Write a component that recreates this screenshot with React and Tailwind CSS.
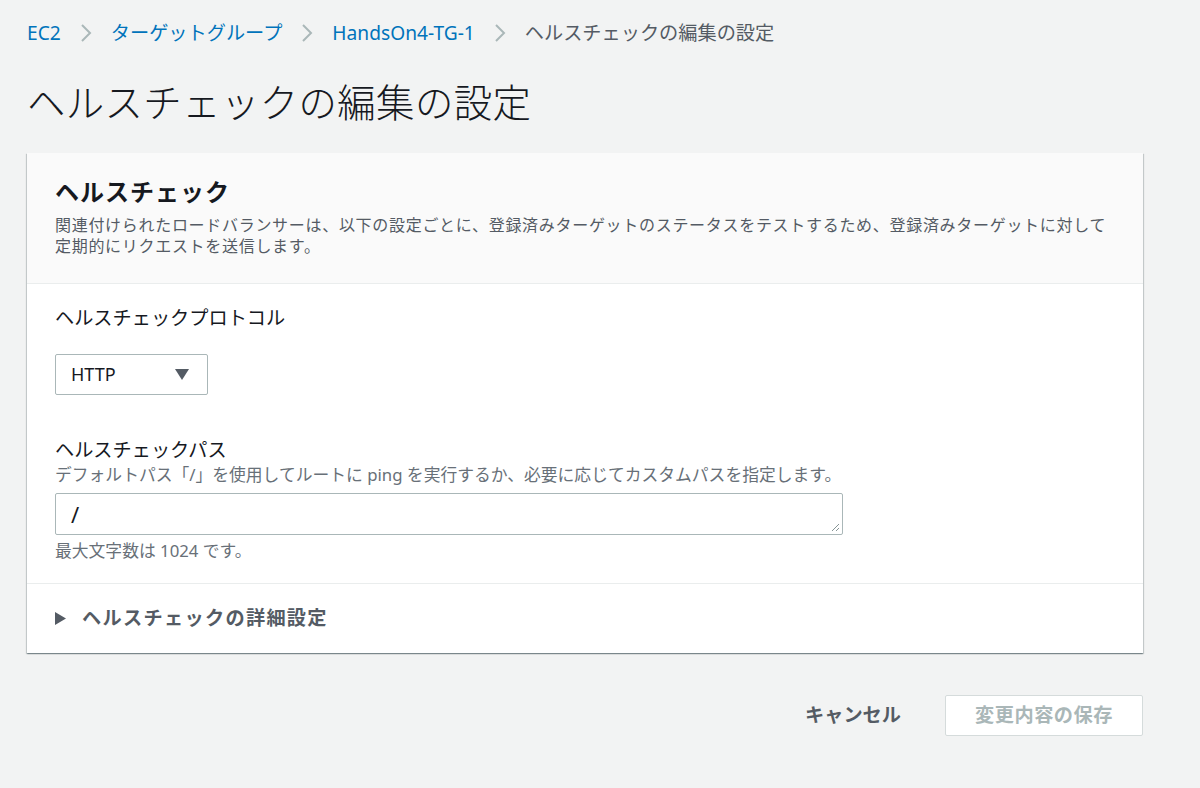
import React from "react";

const font = { fontFamily: '"Noto Sans", "Noto Sans CJK JP", sans-serif' };

const Chevron = () => (
  <svg width="12" height="20" viewBox="0 0 12 20" className="mx-[19px]">
    <path d="M2 2 L10 10 L2 18" fill="none" stroke="#aab7b8" strokeWidth="2" />
  </svg>
);

const App = () => {
  return (
    <div
      className="min-h-[788px] w-[1200px] bg-[#f2f3f3] text-[#16191f] px-[27px] overflow-hidden"
      style={font}
    >
      <nav className="flex items-center h-[20px] mt-[23px] text-[19.2px] leading-[20px]">
        <a className="text-[#0073bb]">EC2</a>
        <Chevron />
        <a className="text-[#0073bb]">ターゲットグループ</a>
        <Chevron />
        <a className="text-[#0073bb]">HandsOn4-TG-1</a>
        <Chevron />
        <span className="text-[#545b64]">ヘルスチェックの編集の設定</span>
      </nav>

      <h1 className="mt-[35px] text-[38.4px] leading-[48px] font-light tracking-[0.4px]">
        ヘルスチェックの編集の設定
      </h1>

      <div className="mt-[27px] w-[1116px] bg-white shadow-[0_1px_1px_0_rgba(0,28,36,0.3),1px_1px_1px_0_rgba(0,28,36,0.15),-1px_1px_1px_0_rgba(0,28,36,0.15)]">
        <div className="bg-[#fafafa] border-b border-[#eaeded] px-[28px] pt-[23px] h-[131px]">
          <h2 className="text-[24px] leading-[32px] font-bold tracking-[1px]">ヘルスチェック</h2>
          <div className="mt-[7px] text-[16px] leading-[21px] text-[#545b64] tracking-[0.7px]">
            <div>
              関連付けられたロードバランサーは、以下の設定ごとに、登録済みターゲットのステータスをテストするため、登録済みターゲットに対して
            </div>
            <div>定期的にリクエストを送信します。</div>
          </div>
        </div>

        <div className="px-[28px] pt-[21px] pb-[22px] border-b border-[#eaeded]">
          <div className="text-[19.2px] leading-[26px]">ヘルスチェックプロトコル</div>
          <div className="mt-[23px] w-[153px] h-[41px] border border-[#aab7b8] rounded-[2px] bg-white flex items-center justify-between pl-[15px] pr-[18px]">
            <span className="text-[18px]">HTTP</span>
            <svg width="14" height="11" viewBox="0 0 14 11">
              <path d="M0 0 H14 L7 11 Z" fill="#545b64" />
            </svg>
          </div>

          <div className="mt-[42px] text-[19.2px] leading-[26px]">ヘルスチェックパス</div>
          <div className="mt-[2px] text-[16.8px] leading-[20px] text-[#687078]">
            デフォルトパス「/」を使用してルートに ping を実行するか、必要に応じてカスタムパスを指定します。
          </div>
          <div className="relative mt-[8px] w-[788px] h-[42px] border border-[#aab7b8] rounded-[2px] bg-white flex items-center px-[15px]">
            <span className="text-[22px]">/</span>
            <svg className="absolute right-[2px] bottom-[2px]" width="9" height="9" viewBox="0 0 9 9">
              <path d="M1 8 L8 1 M5 8 L8 5" stroke="#879596" strokeWidth="1" />
            </svg>
          </div>
          <div className="mt-[6px] text-[16.8px] leading-[20px] text-[#687078]">最大文字数は 1024 です。</div>
        </div>

        <div className="flex items-center h-[69px] px-[28px] text-[#545b64]">
          <svg width="11" height="13" viewBox="0 0 11 13">
            <path d="M0 0 L11 6.5 L0 13 Z" fill="#545b64" />
          </svg>
          <span className="ml-[16px] text-[19.2px] font-bold tracking-[1.3px]">ヘルスチェックの詳細設定</span>
        </div>
      </div>

      <div className="flex justify-end items-center mt-[42px] w-[1116px]">
        <button className="text-[19.2px] font-bold text-[#545b64] mr-[44px]">キャンセル</button>
        <button className="w-[198px] h-[41px] border border-[#d5dbdb] bg-white rounded-[2px] text-[19.2px] font-bold text-[#aab7b8] tracking-[0.5px]">
          変更内容の保存
        </button>
      </div>
    </div>
  );
};

export default App;
